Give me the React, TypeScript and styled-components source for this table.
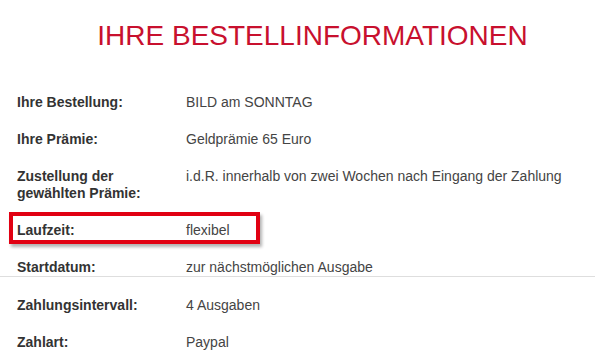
import styled, { createGlobalStyle } from "styled-components";

const GlobalStyle = createGlobalStyle`
  html, body {
    margin: 0;
    padding: 0;
    background: #fff;
  }
  body {
    font-family: "Liberation Sans", Arial, sans-serif;
  }
`;

const Page = styled.div`
  width: 595px;
  height: 362px;
  overflow: hidden;
  background: #fff;
`;

const Title = styled.h1`
  margin: 20px 0 0;
  padding-left: 30px;
  font-size: 28px;
  line-height: 32px;
  font-weight: normal;
  text-align: center;
  color: #c8102e;
`;

const Section = styled.div<{ $divider?: boolean }>`
  border-bottom: ${(p) => (p.$divider ? "1px solid #dedede" : "none")};
`;

const Row = styled.div<{ $highlight?: boolean; $flushBottom?: boolean }>`
  position: relative;
  display: grid;
  grid-template-columns: 169px 1fr;
  padding: 10px 0 ${(p) => (p.$flushBottom ? "0" : "10px")} 17px;
  font-size: 14px;
  line-height: 17px;

  ${(p) =>
    p.$highlight &&
    `
    &::after {
      content: "";
      position: absolute;
      left: 9px;
      top: 0;
      width: 251px;
      height: 32px;
      box-sizing: border-box;
      border: 4px solid #e10012;
      box-shadow: 2px 3px 3px rgba(0, 0, 0, 0.3);
    }
  `}
`;

const Label = styled.div`
  font-weight: bold;
  color: #333;
`;

const Value = styled.div`
  color: #444;
`;

const Rows = styled.div`
  margin-top: 32px;
`;

const Lower = styled.div`
  padding-top: 10px;
`;

export default function App() {
  return (
    <Page>
      <GlobalStyle />
      <Title>IHRE BESTELLINFORMATIONEN</Title>
      <Rows>
        <Section $divider>
          <Row>
            <Label>Ihre Bestellung:</Label>
            <Value>BILD am SONNTAG</Value>
          </Row>
          <Row>
            <Label>Ihre Prämie:</Label>
            <Value>Geldprämie 65 Euro</Value>
          </Row>
          <Row>
            <Label>
              Zustellung der
              <br />
              gewählten Prämie:
            </Label>
            <Value>i.d.R. innerhalb von zwei Wochen nach Eingang der Zahlung</Value>
          </Row>
          <Row $highlight>
            <Label>Laufzeit:</Label>
            <Value>flexibel</Value>
          </Row>
          <Row $flushBottom>
            <Label>Startdatum:</Label>
            <Value>zur nächstmöglichen Ausgabe</Value>
          </Row>
        </Section>
        <Lower>
          <Row>
            <Label>Zahlungsintervall:</Label>
            <Value>4 Ausgaben</Value>
          </Row>
          <Row>
            <Label>Zahlart:</Label>
            <Value>Paypal</Value>
          </Row>
        </Lower>
      </Rows>
    </Page>
  );
}
